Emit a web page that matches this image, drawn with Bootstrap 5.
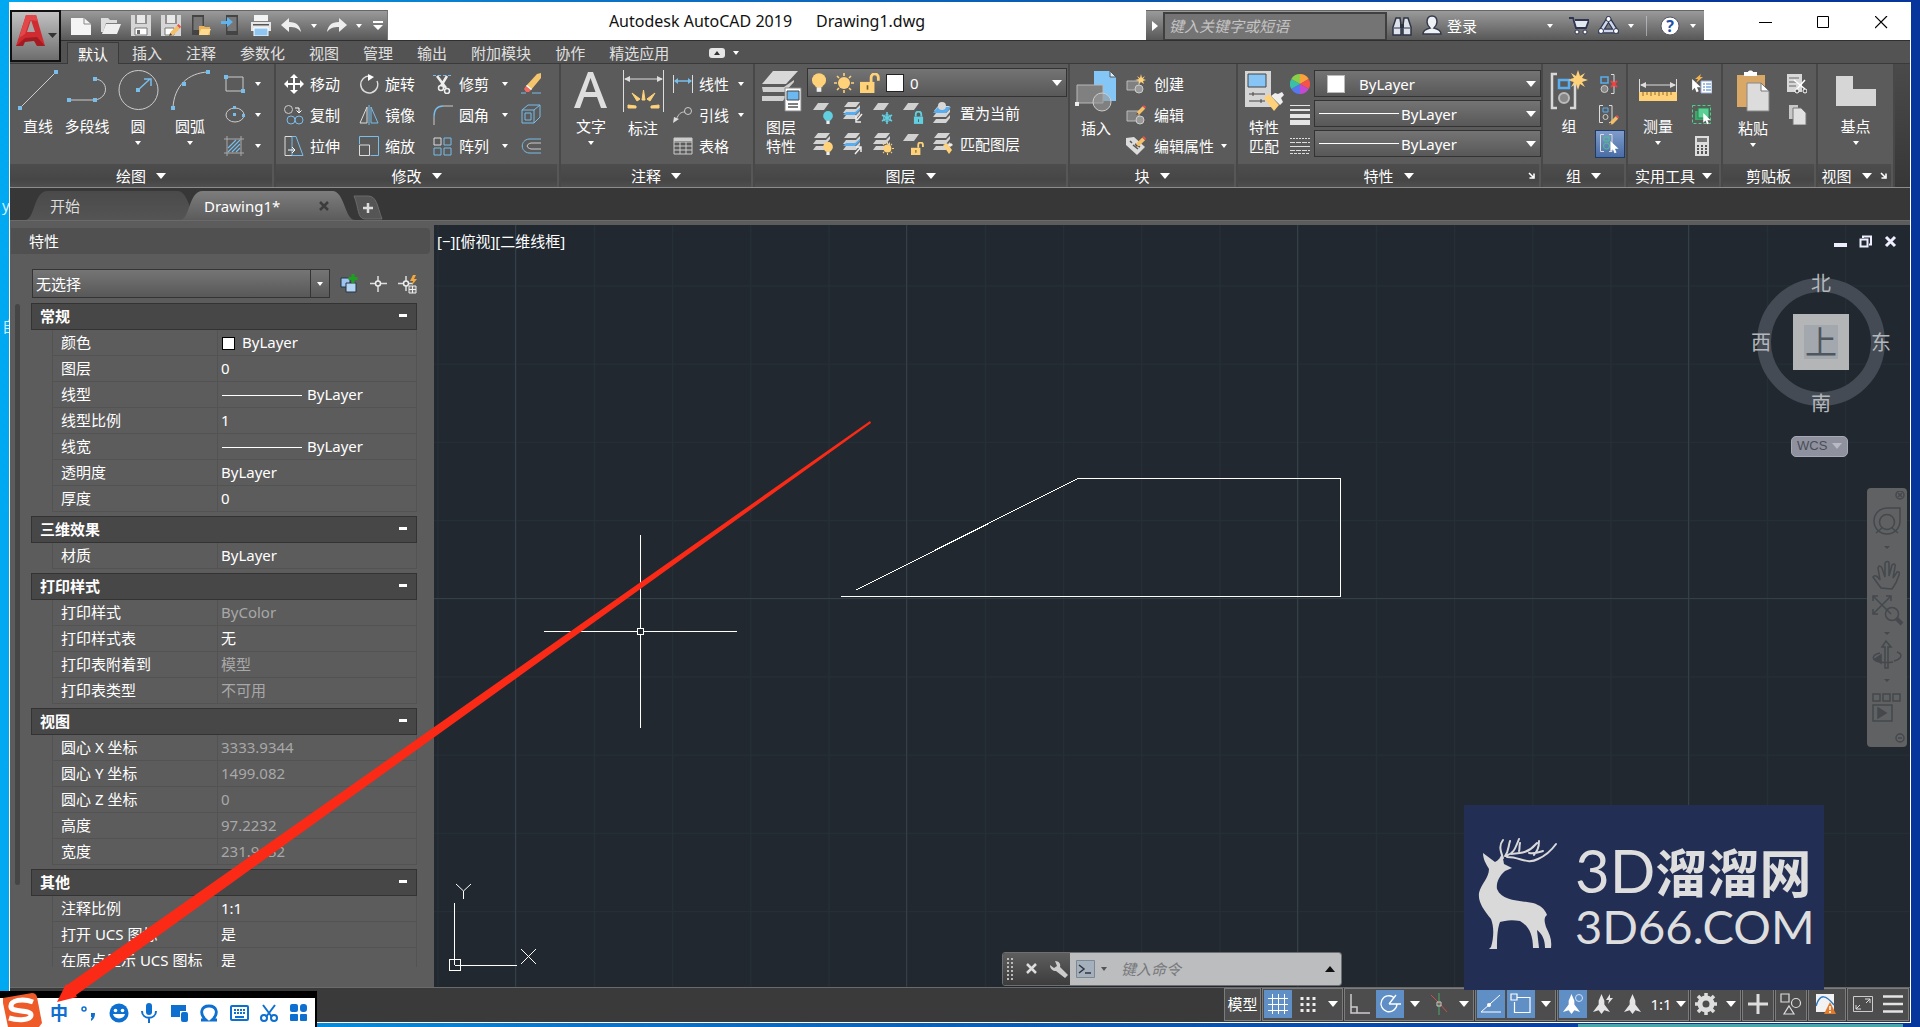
<!DOCTYPE html>
<html lang="zh-CN">
<head>
<meta charset="utf-8">
<meta name="viewport" content="width=device-width, initial-scale=1">
<title>Autodesk AutoCAD 2019 - Drawing1.dwg</title>
<link href="https://cdn.jsdelivr.net/npm/bootstrap@5.3.0/dist/css/bootstrap.min.css" rel="stylesheet">
<style>
:root{--lt:#dcdcdc;--bl:#79bdea;--yl:#ffd27a;--pn:#5b5b5b}
body{margin:0;font:15px/20px "Noto Sans","Noto Sans CJK SC",sans-serif;color:#fff;overflow:hidden}
svg{display:block;flex:none;fill:none}
button{font:inherit;color:inherit;background:none;border:0;padding:0;line-height:20px}
select,input{font:inherit;color:inherit;background:none;border:0;padding:0;appearance:none;outline:0;min-width:0}
option{color:#000}
.desk{height:100vh;padding:2px 9px 4px;background:linear-gradient(90deg,#00a9f2 0,#0b74c8 30%,#0a56ae 60%,#06359c 90%)}
.desk-txt{left:2px;color:#cfeeff}
.teal{right:17px;bottom:0;width:325px;height:3px;background:#4aa5a8}
.win{height:100%;border:1px solid #fff;border-top:0;background:#373737}
/* title bar */
.ttl{height:38px;background:#fff;color:#111;padding:8px 0 0 51px}
.ttl-text{font-size:16px;line-height:22px}
.grad{background:linear-gradient(#9a9a9a,#585858);border-top:1px solid #666}
.appbtn{left:0;top:8px;width:51px;height:52px;border:2px solid #111;background:linear-gradient(#c2c2c2,#6d6d6d);z-index:3}
.qat{width:327px;padding-left:5px;border-right:1px solid #777}
.qb{width:30px;height:29px;display:flex;align-items:center;justify-content:center}
.qs{width:15px}
.info{width:558px;color:#fff}
.info input{width:224px;height:28px;background:#747474;border:1px solid #3f3f3f;border-width:2px 2px 1px;padding-left:4px}
.info input::placeholder{color:#c4c4c4;opacity:1;font-style:italic}
.wbtn{width:58px;height:24px;display:flex;align-items:center;justify-content:center}
.tri{width:0;height:0;border:3px solid transparent;border-top:4px solid #fff;border-bottom:0;flex:none}
.tri-l{border-width:5px;border-top-width:6px;border-bottom-width:0}
/* menu tabs */
.menu{height:24px;background:#535353;border-top:1px solid #2f2f2f;border-bottom:1px solid #3a3a3a;padding:1px 0 0 57px;color:#e0e0e0}
.menu a{color:inherit;text-decoration:none;padding:0 12px;height:22px;line-height:22px;white-space:nowrap}
.menu a.on{background:var(--pn);border:1px solid #3a3a3a;border-bottom:0;margin:0 1px 0 0;padding:0 10px;color:#fff}
/* ribbon */
.ribbon{height:124px;background:linear-gradient(#4a4a4a,#373737);border-bottom:1px solid #8c8c8c}
.rp{background:var(--pn);border-right:2px solid #484848;display:flex;flex-direction:column;flex:none}
.rp-body{height:100px;padding:4px 0 0 4px;display:flex}
.rp-ttl{height:23px;background:linear-gradient(#4d4d4d,#464646 70%,#4f4f4f);border-right:2px solid #575757;display:flex;align-items:center;justify-content:center;gap:10px;position:relative}
.lnch{position:absolute;right:4px;top:8px}
.big{width:52px;display:flex;flex-direction:column;align-items:center;height:93px;padding-top:2px}
.big svg{margin-bottom:6px}
.big .tri{margin-top:5px}
.big .tight{line-height:19px;text-align:center;white-space:nowrap}
.sm{height:31px;display:flex;align-items:center;gap:6px;white-space:nowrap}
.stack{display:flex;flex-direction:column}
.dd{width:16px;height:31px;display:flex;align-items:center;justify-content:center}
.combo{display:flex;align-items:center;height:27px;border:1px solid #333;background:linear-gradient(#747474,#585858);padding:0 4px;gap:2px}
.combo .ln{width:80px;height:1px;background:#fff;flex:none}
.swt{width:18px;height:18px;background:#fff;border:1px solid #222;flex:none}
/* file tabs */
.files{height:32px;background:#373737;padding:3px 0 0 25px}
.ft{width:155px;height:29px;position:relative;display:flex;align-items:center;color:#ddd;text-align:left}
.ft .shape{position:absolute;left:-10px;top:0;width:calc(100% + 20px);height:100%}
.ft>span,.ft>button{position:relative}
.strip{height:5px;background:#5c5c5c;border-top:1px solid #6a6a6a}
/* palette */
.pal{width:424px;background:#5c5c5c;flex:none;padding:3px 0 20px}
.pal-h{height:27px;background:#505050;border-radius:0 4px 4px 0;margin:0 4px 0 1px;padding-left:18px;line-height:26px}
.pal-sel{height:29px;width:298px;border:1px solid #343434;background:linear-gradient(#757575,#585858)}
.pal-sel select{padding-left:3px}
.pal-sel .dv{width:19px;height:27px;border-left:1px solid #343434;display:flex;align-items:center;justify-content:center}
.pal-bar{width:5px;height:581px;background:#454545;border-radius:3px;margin:1px 11px 0 5px;flex:none}
.sec-h{width:100%;height:27px;background:#474747;border:1px solid #333;display:flex;align-items:center;justify-content:space-between;padding:0 9px 2px 8px;font-weight:700}
.sec-h i{width:8px;height:3px;background:#fff}
.pt{width:365px;margin:0 0 4px 21px;table-layout:fixed;border-collapse:separate;border-spacing:0}
.pt th,.pt td{height:26px;border:0 solid #535353;border-width:0 1px 1px 0;font-weight:400;padding:0 0 2px 3px;line-height:20px;white-space:nowrap}
.pt th{width:166px;padding-left:8px;border-left-width:1px}
.pt .off{color:#a8a8a8}
.pt .ln{display:inline-block;width:80px;height:1px;background:#fff;vertical-align:middle;margin:0 5px 0 1px}
.pt .sq{display:inline-block;width:13px;height:13px;border:1px solid #000;background:#fff;vertical-align:-2px;margin:0 7px 0 1px}
/* drawing area */
.cv{background:#212830;flex:1 1 0;min-width:0}
.cv-l{left:3px;top:6px}
.cv-w{right:12px;top:10px;gap:11px}
.cube{right:17px;top:42px;width:144px}
.wcs{right:62px;top:211px;width:57px;height:21px;border-radius:5px;background:#8f929e;border:1px solid #a6a9b4;color:#4a4d58;font:13px/18px "Liberation Sans",sans-serif;justify-content:space-between;padding:0 5px}
.nav-b{right:3px;top:263px;width:40px;height:259px;border-radius:4px;background:#5f6163;padding-top:3px}
.cmd{left:568px;bottom:1px;width:340px;height:34px;border-radius:3px;overflow:hidden;border:1px solid #6d6f71}
.cmd-l{width:67px;flex:none;background:linear-gradient(#5e5e5e,#3c3c3c);gap:12px;padding-left:4px}
.cmd-l button{flex:none}
.cmd-r{background:#bcbdbf;color:#555;padding:0 6px;gap:6px;min-width:0}
.cmd-r input{width:0}
.cmd-r input::placeholder{color:#77797b;opacity:1;font-style:italic}
.logo{right:86px;bottom:32px;width:360px;height:185px;background:#222e54;color:#dedede;z-index:4}
.logo .t1{font:700 52px/58px "Lato","Noto Sans CJK SC",sans-serif;left:111px;top:36px;white-space:nowrap}
.logo .t1 b{font-weight:400;font-size:60px}
.logo .t2{font:400 47px/44px Lato,sans-serif;left:111px;top:99px}
/* status bar */
.stat{height:36px;background:#3a3a3a;border-top:1px solid #6a6a6a;padding:0 1px 1px 0;gap:1px}
.sg{display:flex;gap:2px;align-items:center;padding:1px;border:1px solid #7c7c7c;background:#4d4d4d}
.sg button{width:28px;height:28px;display:flex;align-items:center;justify-content:center;flex:none;white-space:nowrap}
.sg button.cr{width:17px}
.sg button.on{background:#5f8fc5}
/* input-method bar */
.ime{left:0;bottom:0;width:317px;height:36px;background:#000;z-index:6;padding:7px 2px 0 0}
.ime-in{background:#fff;padding-left:44px;color:#0d6fd0}
.ime-in button{width:30px;display:flex;justify-content:center;align-items:center}
.arrow{left:0;top:0;width:100%;height:100%;pointer-events:none;z-index:7}
</style>
<script src="https://cdn.jsdelivr.net/npm/bootstrap@5.3.0/dist/js/bootstrap.bundle.min.js"></script>
</head>
<body>
<svg width="0" height="0" class="position-absolute">
<defs>
<linearGradient id="gTab" x1="0" y1="0" x2="0" y2="1"><stop offset="0" stop-color="#7d7d7d"/><stop offset="1" stop-color="#5c5c5c"/></linearGradient>
<linearGradient id="gTab2" x1="0" y1="0" x2="0" y2="1"><stop offset="0" stop-color="#4a4a4a"/><stop offset="1" stop-color="#545454"/></linearGradient>
<symbol id="sheet" viewBox="0 0 20 20"><path d="M6 1h11l-5 7H1z" fill="#d0d0d0"/></symbol>
<symbol id="stk" viewBox="0 0 20 20"><path d="M6 0h12l-4 5H2zM4 7h10l4-4v3l-4 5H1zM4 13h10l4-4v3l-4 5H1z" fill="#d4d4d4"/></symbol>
<symbol id="bulb" viewBox="0 0 12 16"><g fill="currentColor"><circle cx="6" cy="6" r="6"/><path d="M3 10h6v2H3z"/></g><path d="M4 12h4v4H4z" fill="#eee"/></symbol>
<symbol id="lock" viewBox="0 0 12 14"><path d="M1 6h10v8H1z" fill="currentColor"/><path d="M3 6V3.500a3 3 0 0 1 6 0V6" stroke="currentColor" stroke-width="2"/><path d="M5.500 9h1v3h-1z" fill="#555"/></symbol>
<symbol id="unlock" viewBox="0 0 18 18"><path d="M0 8h13v10H0z" fill="#ffd27a"/><path d="M10 8V4a3 3 0 0 1 6.500 0v3" stroke="#ffd27a" stroke-width="2.500"/><path d="M6 11h1.500v4H6z" fill="#7a6030"/></symbol>
<symbol id="sun" viewBox="0 0 20 20"><circle cx="10" cy="10" r="6" fill="#ffd27a"/><path d="M10 0v3M10 17v3M0 10h3M17 10h3M3 3l2 2M15 15l2 2M17 3l-2 2M5 15l-2 2" stroke="#ffd27a" stroke-width="1.600"/></symbol>
<symbol id="pencil" viewBox="0 0 12 12"><path d="M0 12l1.500-4L8 1.500l3 3L4.500 11z" fill="#f3c069"/><path d="M8 1.500L9.500 0 12 2.500 11 4.500z" fill="#e8504c"/><path d="M0 12l1.200-3 2 2z" fill="#444"/></symbol>
<symbol id="cur" viewBox="0 0 10 16"><path d="M0 0v13l3-3 2 5 2.500-1-2-4.500H10z" fill="#fff"/></symbol>
<symbol id="launch" viewBox="0 0 7 7"><path d="M1 1l4 4M6 1.500V6H1.500" stroke="#fff" stroke-width="1.600"/></symbol>
<symbol id="man" viewBox="0 0 20 22"><path d="M10 0l3 7v4l6 8-6-2-3 4-3-4-6 2 6-8V7z" fill="#fff"/></symbol>
</defs>
</svg>

<div class="desk position-relative">
<span class="desk-txt position-absolute" style="top:195px">y</span>
<span class="desk-txt position-absolute" style="top:316px">自</span>
<div class="teal position-absolute"></div>
<div class="win d-flex flex-column position-relative">

<header class="ttl d-flex position-relative">
<button class="appbtn position-absolute d-flex align-items-center" aria-label="应用程序菜单">
<svg width="46" height="48" viewBox="0 0 46 48"><path d="M4 34L14 3h10l9 31h-8l-2-8H13l-2 8z" fill="#cf2b30"/><path d="M15 20l4-12 4 12z" fill="#a7a7a7"/><path d="M4 34l9-8 12-1 8 9h-8l-3-5-9 1-2 4z" fill="#a31c22"/><path d="M14 3h10l2 6-8-1-5 14-6 4z" fill="#e2474a"/><path d="M36 21h9l-4.500 5z" fill="#333"/></svg></button>
<div class="qat grad d-flex">
<button class="qb" aria-label="新建"><svg width="20" height="18"><path d="M0 1h13l7 6v11H0z" fill="#f4f4f4"/><path d="M13 1v6h7" stroke="#888"/></svg></button>
<button class="qb" aria-label="打开"><svg width="20" height="18"><path d="M0 1h7l2 2h7v3H5L2 15H0z" fill="#ddd"/><path d="M5 7h15l-4 10H1z" fill="#efefef"/></svg></button>
<button class="qb" aria-label="保存"><svg width="20" height="21"><path d="M0 0h20v21H0z" fill="#d6d6d6"/><path d="M4 0h12v9H4z" fill="#8f8f8f"/><path d="M6 0h8v8H6z" fill="#e8e8e8"/><path d="M4 13h12v7H4z" fill="#fff" stroke="#777"/><path d="M6 15h3v4H6z" fill="#666"/></svg></button>
<button class="qb" aria-label="另存为"><svg width="20" height="21"><path d="M0 0h20v21H0z" fill="#d6d6d6"/><path d="M4 0h12v9H4z" fill="#8f8f8f"/><path d="M6 0h8v8H6z" fill="#e8e8e8"/><path d="M4 13h9v7H4z" fill="#fff" stroke="#777"/><use href="#pencil" x="8" y="9" width="12" height="12"/></svg></button>
<button class="qb" aria-label="从 Web 打开"><svg width="20" height="21"><path d="M1 0h12v20H1z" fill="#444"/><path d="M2.500 2h9v13h-9z" fill="#777"/><path d="M8 11h5l1 1h5v8H8z" fill="#e9b45c"/><path d="M10 14h10l-3 6H8z" fill="#ffd98e"/></svg></button>
<button class="qb" aria-label="保存到 Web"><svg width="20" height="21"><path d="M5 0h12v20H5z" fill="#444"/><path d="M6.500 2h9v14h-9z" fill="#777"/><path d="M0 6h6V2l6 5-6 5V9H0z" fill="#5fb4f0"/></svg></button>
<button class="qb" aria-label="打印"><svg width="22" height="21"><path d="M4 0h14v6H4z" fill="#f3f3f3"/><path d="M1 7h20v9H1z" fill="#e6e6e6"/><path d="M3 9h16v1.500H3z" fill="#555"/><path d="M4 13h14v8H4z" fill="#8fc7f2" stroke="#fff"/></svg></button>
<button class="qb" aria-label="放弃"><svg width="21" height="16"><path d="M8 0v4c8 0 11 4 12 10-3-4-6-5-12-5v5L0 7z" fill="#eee"/></svg></button>
<button class="qb qs" aria-label="放弃列表"><span class="tri"></span></button>
<button class="qb" aria-label="重做"><svg width="21" height="16"><path d="M13 0v4C5 4 2 8 1 14c3-4 6-5 12-5v5l8-7z" fill="#eee"/></svg></button>
<button class="qb qs" aria-label="重做列表"><span class="tri"></span></button>
<button class="qb qs ms-1" aria-label="自定义快速访问工具栏"><svg width="10" height="10"><path d="M0 0h10v2H0zM0 4h10L5 9z" fill="#fff"/></svg></button>
</div>
<div class="ttl-text flex-grow-1 text-center"><span class="me-4">Autodesk AutoCAD 2019</span><span>Drawing1.dwg</span></div>
<div class="info grad d-flex align-items-center">
<button class="qb" style="width:17px" aria-label="展开搜索"><svg width="6" height="10"><path d="M0 0l6 5-6 5z" fill="#fff"/></svg></button>
<input type="text" aria-label="搜索" placeholder="键入关键字或短语">
<button class="qb" aria-label="搜索帮助"><svg width="20" height="20"><path d="M4 2h4l1 7v10H1v-8zM12 2h4l3 9v8h-8V9z" fill="#dfe4ec" stroke="#2c3344" stroke-width="1.500"/><path d="M8 8h4v4H8z" fill="#2c3344"/><path d="M2 12h6M12 12h6" stroke="#2c3344"/></svg></button>
<button class="qb" aria-label="用户"><svg width="20" height="21"><path d="M10 1c-4 0-5 3-5 6 0 2 1 4 3 6-4 1-7 3-7 6h18c0-3-3-5-7-6 2-2 3-4 3-6 0-3-1-6-5-6z" fill="#eef1f6" stroke="#333a4a" stroke-width="1.500"/></svg></button>
<button class="me-auto">登录</button>
<button class="qb qs" aria-label="登录选项"><span class="tri"></span></button>
<button class="qb ms-2" style="width:28px" aria-label="应用商店"><svg width="20" height="19"><path d="M0 2h4l3 10h10l3-8H6" fill="#e4e8f0" stroke="#2d3552" stroke-width="1.800"/><circle cx="8" cy="16" r="2" fill="#fff" stroke="#2d3552"/><circle cx="16" cy="16" r="2" fill="#fff" stroke="#2d3552"/></svg></button>
<button class="qb" aria-label="A360"><svg width="21" height="19"><path d="M10.500 3L3 15h15z" stroke="#2d3552" stroke-width="5"/><path d="M10.500 3L3 15h15z" stroke="#cfd8ea" stroke-width="2.500"/><g fill="#fff" stroke="#2d3552"><circle cx="10.500" cy="3" r="2.500"/><circle cx="3" cy="15" r="2.500"/><circle cx="18" cy="15" r="2.500"/></g></svg></button>
<button class="qb qs" aria-label="A360 选项"><span class="tri"></span></button>
<span class="border-start mx-2 opacity-50" style="height:20px"></span>
<button class="qb" aria-label="帮助"><svg width="20" height="20"><circle cx="10" cy="10" r="9" fill="#fff" stroke="#556"/><text x="10" y="16" text-anchor="middle" font-size="16" font-weight="700" fill="#2250a8">?</text></svg></button>
<button class="qb qs me-1" aria-label="帮助选项"><span class="tri"></span></button>
</div>
<div class="d-flex ms-4 ps-2">
<button class="wbtn" aria-label="最小化"><svg width="13" height="13"><path d="M0 6.500h13" stroke="#000"/></svg></button>
<button class="wbtn" aria-label="最大化"><svg width="13" height="13"><path d="M.5.5h11v11H.5z" stroke="#000"/></svg></button>
<button class="wbtn" aria-label="关闭"><svg width="13" height="13"><path d="M0 0l12 12M12 0L0 12" stroke="#000" stroke-width="1.200"/></svg></button>
</div>
</header>

<nav class="menu d-flex">
<a class="on" href="#">默认</a><a href="#">插入</a><a href="#">注释</a><a href="#">参数化</a><a href="#">视图</a><a href="#">管理</a><a href="#">输出</a><a href="#">附加模块</a><a href="#">协作</a><a href="#">精选应用</a>
<button class="d-flex align-items-center gap-2 ms-4 ps-1" aria-label="最小化功能区"><svg width="16" height="10"><path d="M3 0h10q3 0 3 3v4q0 3-3 3H3q-3 0-3-3V3q0-3 3-3z" fill="#e6e6e6"/><path d="M5 7h6L8 3z" fill="#333"/></svg><span class="tri"></span></button>
</nav>

<section class="ribbon d-flex">
<div class="rp" style="width:266px">
<div class="rp-body">
<button class="big" style="width:48px"><svg width="40" height="40"><path d="M2 38L38 2" stroke="#ccc"/><path d="M0 36h4v4H0zM36 0h4v4h-4z" fill="#79bdea"/></svg>直线</button>
<button class="big" style="width:50px"><svg width="40" height="40"><path d="M2 30h26c14-2 14-20 0-21" stroke="#ccc"/><path d="M0 28h4v4H0zM26 28h4v4h-4zM26 7h4v4h-4z" fill="#79bdea"/></svg>多段线</button>
<button class="big"><svg width="41" height="40"><circle cx="20.500" cy="20" r="19.500" stroke="#ccc"/><path d="M20 20L32 9M26 9h7v7" stroke="#79bdea" stroke-width="1.500"/><path d="M18 18h4v4h-4z" fill="#79bdea"/></svg>圆<span class="tri"></span></button>
<button class="big"><svg width="40" height="40"><path d="M3 38C4 16 18 3 38 2" stroke="#ccc"/><path d="M1 36h4v4H1zM12 12h4v4h-4zM36 0h4v4h-4z" fill="#79bdea"/></svg>圆弧<span class="tri"></span></button>
<div class="stack ps-2">
<div class="d-flex"><button class="sm" aria-label="矩形"><svg width="22" height="18"><path d="M2 2h17v14H2z" stroke="#ccc"/><path d="M0 0h4v4H0zM17 14h4v4h-4z" fill="#79bdea"/></svg></button><button class="dd ms-1" aria-label="矩形选项"><span class="tri"></span></button></div>
<div class="d-flex"><button class="sm" aria-label="椭圆"><svg width="22" height="18"><ellipse cx="11" cy="9" rx="9" ry="7" stroke="#ccc"/><path d="M9 7h3v3H9zM9 0h3v3H9zM18 8h3v3h-3z" fill="#79bdea"/></svg></button><button class="dd ms-1" aria-label="椭圆选项"><span class="tri"></span></button></div>
<div class="d-flex"><button class="sm" aria-label="图案填充"><svg width="22" height="20"><path d="M3 0v20M17 0v20M0 3h20M0 17h20" stroke="#aaa"/><path d="M4 12l8-8M4 16L16 4M8 16l8-8M12 16l4-4" stroke="#79bdea" stroke-width="1.200"/></svg></button><button class="dd ms-1" aria-label="填充选项"><span class="tri"></span></button></div>
</div>
</div>
<div class="rp-ttl">绘图<span class="tri tri-l"></span></div>
</div>

<div class="rp" style="width:285px">
<div class="rp-body ps-2">
<div class="stack" style="width:75px">
<button class="sm"><svg width="20" height="20"><path d="M10 0l4 4h-3v5h5V6l4 4-4 4v-3h-5v5h3l-4 4-4-4h3v-5H4v3l-4-4 4-4v3h5V4H6z" fill="#fff"/></svg>移动</button>
<button class="sm"><svg width="20" height="20"><circle cx="4.500" cy="4.500" r="4" stroke="#ccc"/><path d="M11 3h4v4M12.500 5.500L15 8l2.500-2.500" stroke="#fff"/><circle cx="7" cy="15" r="4" stroke="#79bdea"/><circle cx="15" cy="15" r="4" stroke="#79bdea"/></svg>复制</button>
<button class="sm"><svg width="20" height="20"><path d="M8 .5H1v19h7" stroke="#ddd"/><path d="M8 .5v19M8 .5h4l7 19H8" stroke="#79bdea"/><path d="M4 14h7M8 11l3 3-3 3" stroke="#fff"/></svg>拉伸</button>
</div>
<div class="stack" style="width:74px">
<button class="sm"><svg width="20" height="20"><path d="M11 2a8.500 8.500 0 1 0 7 5" stroke="#ddd" stroke-width="1.400"/><path d="M9 0l6 3-6 4z" fill="#fff"/></svg>旋转</button>
<button class="sm"><svg width="20" height="20"><path d="M8 2v16H1z" stroke="#ddd"/><path d="M12 2v16h7z" stroke="#79bdea"/><path d="M10 0v20" stroke="#79bdea"/></svg>镜像</button>
<button class="sm"><svg width="20" height="20"><path d="M.5 8V.5h19v19h-8" stroke="#79bdea"/><path d="M.5 9h10v10.500H.5z" stroke="#ddd"/></svg>缩放</button>
</div>
<div class="stack">
<div class="d-flex"><button class="sm"><svg width="20" height="20"><path d="M0 1.500h20" stroke="#79bdea" stroke-dasharray="3 2"/><path d="M4 2l9 12M14 2L8 12" stroke="#eee" stroke-width="2.500"/><circle cx="8" cy="14" r="2.500" stroke="#eee" stroke-width="1.500"/><circle cx="14" cy="17" r="2.500" stroke="#eee" stroke-width="1.500"/></svg>修剪</button><button class="dd ms-2" aria-label="修剪选项"><span class="tri"></span></button></div>
<div class="d-flex"><button class="sm"><svg width="20" height="20"><path d="M1 12v8M10 1h10" stroke="#ccc"/><path d="M1 12C1 5 4 1 10 1" stroke="#79bdea" stroke-width="1.300"/></svg>圆角</button><button class="dd ms-2" aria-label="圆角选项"><span class="tri"></span></button></div>
<div class="d-flex"><button class="sm"><svg width="20" height="20"><path d="M1 2h7v7H1z" stroke="#ddd"/><path d="M11 2h7v7h-7zM1 12h7v7H1zM11 12h7v7h-7z" stroke="#79bdea"/></svg>阵列</button><button class="dd ms-2" aria-label="阵列选项"><span class="tri"></span></button></div>
</div>
<div class="stack ms-2">
<button class="sm" aria-label="删除"><svg width="21" height="21"><path d="M0 20h5M11 20h9" stroke="#79bdea"/><path d="M5 13L16 1l4-1v5L10 17z" fill="#f5c56d"/><path d="M5 13l5 4-2 2H5l-2-3z" fill="#f06a62"/><path d="M5 13l5 4 1-1-5-4z" fill="#fff"/></svg></button>
<button class="sm" aria-label="分解"><svg width="21" height="21"><path d="M1 6h12v13H1zM4 9h6v7H4zM1 6l6-5h12v12l-6 6M13 6l6-5" stroke="#79bdea"/></svg></button>
<button class="sm" aria-label="偏移"><svg width="21" height="16"><path d="M20 1H8C-1 2-1 14 8 15h12" stroke="#79bdea"/><path d="M20 5H10c-5 1-5 5 0 6h10" stroke="#ccc"/></svg></button>
</div>
</div>
<div class="rp-ttl">修改<span class="tri tri-l"></span></div>
</div>

<div class="rp" style="width:194px">
<div class="rp-body">
<button class="big"><svg width="36" height="40"><path d="M1 38L15 2h5l14 36h-6l-4-11H11L7 38zM12.500 22h10L17.500 8z" fill="#dedede" fill-rule="evenodd"/></svg>文字<span class="tri"></span></button>
<button class="big"><svg width="41" height="42"><path d="M.5 0v42M40.500 0v42M2 9h37" stroke="#ddd"/><path d="M1 9l6-3v6zM40 9l-6-3v6z" fill="#ddd"/><path d="M19 30l1.500-10L22 30zM14 31l-5-8 8 6zM27 31l5-8-8 6zM13 36l-8-1v3h8zM28 36l8-1v3h-8z" fill="#ffd27a" stroke="#ffd27a"/></svg>标注</button>
<div class="stack ps-1">
<div class="d-flex"><button class="sm"><svg width="20" height="18"><path d="M.5 0v18M19.500 0v18" stroke="#ddd"/><path d="M2 6h16" stroke="#79bdea" stroke-width="1.500"/><path d="M1 6l4-3v6zM19 6l-4-3v6z" fill="#79bdea"/></svg>线性</button><button class="dd ms-1" aria-label="线性选项"><span class="tri"></span></button></div>
<div class="d-flex"><button class="sm"><svg width="20" height="18"><circle cx="15" cy="5" r="3.500" stroke="#ccc"/><path d="M12 6C8 6 6 7 3 14" stroke="#ccc"/><path d="M0 17l1-6 5 2z" fill="#ddd"/></svg>引线</button><button class="dd ms-1" aria-label="引线选项"><span class="tri"></span></button></div>
<button class="sm"><svg width="20" height="18"><path d="M1 1h18v16H1zM1 5h18M1 9h18M1 13h18M7 5v12M13 5v12" stroke="#ccc"/><path d="M1 1h18v3H1z" fill="#ccc"/></svg>表格</button>
</div>
</div>
<div class="rp-ttl">注释<span class="tri tri-l"></span></div>
</div>

<div class="rp" style="width:315px">
<div class="rp-body ps-0">
<button class="big"><svg width="42" height="42"><path d="M13 1h25L26 14H2z" fill="#d8d8d8"/><path d="M5 17H2l1 5h22l9-10v-2L24 17zM5 26H2v5h21l3-5z" fill="#cfcfcf"/><path d="M25 18h16v23H25z" fill="#fff" stroke="#888"/><path d="M27 21h12v9H27z" fill="#6cb8f0" stroke="#444"/><path d="M28 34h10M28 37h10" stroke="#555" stroke-width="1.500"/></svg><span class="tight">图层<br>特性</span></button>
<div class="stack">
<div class="combo" style="width:260px;height:29px;gap:6px">
<svg width="16" height="20" color="#ffd27a"><use href="#bulb" width="14" height="19"/></svg>
<svg width="20" height="20"><use href="#sun" width="20" height="20"/></svg>
<svg width="20" height="20"><use href="#unlock" width="20" height="20"/></svg>
<span class="swt"></span><select class="flex-grow-1" aria-label="图层"><option>0</option></select><span class="tri tri-l"></span></div>
<div class="d-flex" style="gap:8px;padding-left:5px">
<button class="sm" aria-label="关"><svg width="22" height="22" color="#62cfe0"><use href="#sheet" width="20" height="20"/><use href="#bulb" x="11" y="9" width="10" height="13"/></svg></button>
<button class="sm" aria-label="隔离"><svg width="22" height="22"><use href="#stk" width="20" height="20"/><path d="M4 10l-3 3h12l5-5v-2l-5 4z" fill="#58aef0"/><path d="M20 12l-5 6M14 14v6h5" stroke="#eee" stroke-width="1.500"/></svg></button>
<button class="sm" aria-label="冻结"><svg width="22" height="22"><use href="#sheet" width="20" height="20"/><path d="M15 10v12M10 13l10 6M20 13l-10 6" stroke="#62cfe0" stroke-width="1.600"/><circle cx="15" cy="16" r="3.500" stroke="#62cfe0"/></svg></button>
<button class="sm" aria-label="锁定"><svg width="22" height="22" color="#62cfe0"><use href="#sheet" width="20" height="20"/><use href="#lock" x="11" y="9" width="11" height="13"/></svg></button>
<button class="sm"><svg width="22" height="22"><use href="#stk" y="4" width="20" height="20"/><path d="M6 5h13l-5 6H1z" fill="#58aef0"/><circle cx="10" cy="4" r="4" fill="#d8d8d8"/></svg>置为当前</button>
</div>
<div class="d-flex" style="gap:8px;padding-left:5px">
<button class="sm" aria-label="打开所有图层"><svg width="22" height="22" color="#ffd27a"><use href="#stk" width="20" height="20"/><use href="#bulb" x="11" y="9" width="10" height="13"/></svg></button>
<button class="sm" aria-label="取消隔离"><svg width="22" height="22"><use href="#stk" width="20" height="20"/><path d="M4 10l-3 3h12l5-5v-2l-5 4z" fill="#58aef0"/><path d="M13 21l6-7M14 14h5v5" stroke="#eee" stroke-width="1.500"/></svg></button>
<button class="sm" aria-label="解冻"><svg width="22" height="22"><use href="#stk" width="20" height="20"/><use href="#sun" x="9" y="9" width="13" height="13"/></svg></button>
<button class="sm" aria-label="解锁"><svg width="22" height="22"><use href="#sheet" width="20" height="20"/><use href="#unlock" x="9" y="9" width="13" height="13"/></svg></button>
<button class="sm"><svg width="22" height="22"><use href="#stk" width="20" height="20"/><path d="M11 12l4-2 5 7-3 4z" fill="#ffd27a"/><path d="M19 10l2 2-3 2-2-2z" fill="#eee"/></svg>匹配图层</button>
</div>
</div>
</div>
<div class="rp-ttl">图层<span class="tri tri-l"></span></div>
</div>

<div class="rp" style="width:168px">
<div class="rp-body ps-0">
<button class="big"><svg width="42" height="42"><path d="M19 1h16l6 6v24H19z" fill="#84c6f5"/><path d="M35 1v6h6z" fill="#d4ecfc" stroke="#555"/><path d="M2 15h26v18H2z" fill="#808080" stroke="#b8b8b8"/><circle cx="27" cy="32" r="9" fill="#999" fill-opacity=".6" stroke="#ccc"/><path d="M0 32h4v4H0z" fill="#eee"/></svg>插入</button>
<div class="stack ps-1 flex-grow-1">
<button class="sm" style="gap:8px"><svg width="20" height="20"><path d="M1 7h12v9H1z" fill="#808080" stroke="#bbb"/><circle cx="13" cy="15" r="4" fill="#999" stroke="#ccc"/><path d="M15 0l1 4 3-2-2 3 3 1-3 1 1 3-3-2-2 2v-3l-4-1 4-1-2-3 3 2z" fill="#ffd27a"/></svg>创建</button>
<button class="sm" style="gap:8px"><svg width="20" height="20"><path d="M1 6h12v10H1z" fill="#808080" stroke="#bbb"/><circle cx="14" cy="15" r="4" fill="#999" stroke="#ccc"/><use href="#pencil" x="10" y="0" width="10" height="10"/></svg>编辑</button>
<div class="d-flex"><button class="sm" style="gap:8px"><svg width="20" height="20"><path d="M0 2l8-1 11 10-8 8L0 9z" fill="#dcdcdc"/><path d="M4 5l2 2M7 9l5 4M9 8l5 3" stroke="#555" stroke-width="1.500"/><use href="#pencil" x="9" y="0" width="11" height="11"/></svg>编辑属性</button><button class="dd ms-auto me-1" aria-label="属性选项"><span class="tri"></span></button></div>
</div>
</div>
<div class="rp-ttl">块<span class="tri tri-l"></span></div>
</div>

<div class="rp" style="width:305px">
<div class="rp-body ps-0">
<button class="big"><svg width="42" height="42"><path d="M2 1h26v36H2z" fill="#d5d5d5"/><path d="M5 4h18v13H5z" fill="#86c5f5" stroke="#444"/><path d="M6 24h16M6 31h16M10 22v4M18 29v4" stroke="#444"/><path d="M21 28l5-4 10 11-5 6z" fill="#ffd27a"/><path d="M28 26l4-3 3 1 4-2 2 3-3 3 2 4-3 3z" fill="#eee"/></svg><span class="tight">特性<br>匹配</span></button>
<div class="stack">
<span class="sm"><svg width="20" height="20" viewBox="-10 -10 20 20"><path d="M0 0V-10A10 10 0 0 1 8.700-5z" fill="#f9a13a"/><path d="M0 0L8.700-5A10 10 0 0 1 8.700 5z" fill="#f5524c"/><path d="M0 0L8.700 5A10 10 0 0 1 0 10z" fill="#c34ad0"/><path d="M0 0V10A10 10 0 0 1-8.700 5z" fill="#5876f0"/><path d="M0 0L-8.700 5A10 10 0 0 1-8.700-5z" fill="#38c0a8"/><path d="M0 0L-8.700-5A10 10 0 0 1 0-10z" fill="#8ace4a"/></svg></span>
<span class="sm"><svg width="20" height="20"><path d="M0 0h20v1H0zM0 4h20v2H0zM0 9h20v4H0zM0 15h20v5H0z" fill="#e4e4e4"/></svg></span>
<span class="sm"><svg width="20" height="18"><path d="M0 1.500h20" stroke="#ddd" stroke-dasharray="2 1"/><path d="M0 5.500h20M0 13.500h20" stroke="#ddd" stroke-dasharray="5 1"/><path d="M0 9.500h20" stroke="#ddd"/><path d="M0 16.500h20" stroke="#ddd" stroke-dasharray="3 1"/></svg></span>
</div>
<div class="stack flex-grow-1 ms-1" style="gap:3px;padding-top:2px">
<div class="combo"><span class="swt mx-2" style="border-color:#bbb"></span><select class="flex-grow-1 ps-1" aria-label="对象颜色"><option>ByLayer</option></select><span class="tri tri-l"></span></div>
<div class="combo"><span class="ln"></span><select class="flex-grow-1" aria-label="线宽"><option>ByLayer</option></select><span class="tri tri-l"></span></div>
<div class="combo"><span class="ln"></span><select class="flex-grow-1" aria-label="线型"><option>ByLayer</option></select><span class="tri tri-l"></span></div>
</div>
</div>
<div class="rp-ttl">特性<span class="tri tri-l"></span><svg class="lnch" width="7" height="7"><use href="#launch" width="7" height="7"/></svg></div>
</div>

<div class="rp" style="width:85px">
<div class="rp-body ps-0">
<button class="big"><svg width="40" height="40"><path d="M8 4H3v34h5M22 10h4v28h-5" stroke="#d8d8d8" stroke-width="2.500"/><path d="M10 10h10v8H10z" stroke="#58aef0" stroke-width="2.500"/><circle cx="15" cy="28" r="5" fill="#888" stroke="#bbb" stroke-width="2"/><path d="M29 0l2 6 5-3-3 5 6 2-6 2 3 5-5-3-2 6-2-6-5 3 3-5-6-2 6-2-3-5 5 3z" fill="#ffd27a"/></svg>组</button>
<div class="stack">
<button class="sm px-1" aria-label="解除编组"><svg width="20" height="20"><path d="M2 3h7v6H2z" stroke="#58aef0" stroke-width="1.500"/><circle cx="5.500" cy="15" r="3.500" fill="#888" stroke="#ccc"/><path d="M12 .5h3v19h-3" stroke="#ddd"/><path d="M12 7l6 6M18 7l-6 6" stroke="#f04040" stroke-width="2"/></svg></button>
<button class="sm px-1" aria-label="组编辑"><svg width="20" height="20"><path d="M4 .5H.5v17H4M10 .5h3v17h-3" stroke="#ddd"/><path d="M4 3h5v4H4z" stroke="#58aef0"/><circle cx="6.500" cy="12" r="2.500" stroke="#ccc"/><use href="#pencil" x="10" y="10" width="10" height="10"/></svg></button>
<button class="sm px-1" style="background:linear-gradient(#7f9ccb,#4a6da6);border:1px solid #1e3a66;height:28px" aria-label="启用组选择"><svg width="20" height="20"><path d="M4 .5H.5v17H4M9 .5h3v17H9" stroke="#ddd"/><path d="M4 3h5v4H4z" stroke="#4fc28a"/><circle cx="6.500" cy="12" r="3" stroke="#4fc28a"/><use href="#cur" x="10" y="7" width="9" height="13"/></svg></button>
</div>
</div>
<div class="rp-ttl">组<span class="tri tri-l"></span></div>
</div>

<div class="rp" style="width:95px">
<div class="rp-body">
<button class="big"><svg width="38" height="40"><path d="M.5 9v14M37.500 9v14M2 15h34" stroke="#ddd"/><path d="M1 15l6-3v6zM37 15l-6-3v6z" fill="#ddd"/><path d="M0 22h38v9H0z" fill="#ffd27a"/><path d="M4 22v4M8 22v3M12 22v4M16 22v3M20 22v4M24 22v3M28 22v4M32 22v3" stroke="#8a6a2a"/></svg>测量<span class="tri"></span></button>
<div class="stack ps-2">
<button class="sm" aria-label="快速选择"><svg width="20" height="20"><path d="M9 7h11v12H9z" fill="#fff" stroke="#9ac"/><path d="M11 10h2M14 10h5M11 13h2M14 13h5M11 16h2M14 16h5" stroke="#3a7fd0"/><use href="#cur" x="0" y="5" width="9" height="14"/><path d="M9 0L3 5h3L4 9l7-6H8z" fill="#f5b14c"/></svg></button>
<button class="sm" aria-label="全部选择"><svg width="20" height="20"><path d="M.5.5h18v18H.5z" stroke="#4fd08a" stroke-dasharray="3 2"/><path d="M3 6h9v9H3z" fill="#3da86c"/><path d="M6 3h11v10H6z" fill="#5cd094" stroke="#2b8050"/><use href="#cur" x="11" y="8" width="8" height="12"/></svg></button>
<button class="sm" aria-label="快速计算器"><svg width="20" height="20"><path d="M3 0h14v20H3z" fill="#ddd"/><path d="M5 2h10v4H5z" fill="#777"/><path d="M5 9h2v2H5zM9 9h2v2H9zM13 9h2v2h-2zM5 12h2v2H5zM9 12h2v2H9zM13 12h2v2h-2zM5 15h2v3H5zM9 15h2v3H9zM13 15h2v3h-2z" fill="#555"/></svg></button>
</div>
</div>
<div class="rp-ttl" style="gap:7px">实用工具<span class="tri tri-l"></span></div>
</div>

<div class="rp" style="width:95px">
<div class="rp-body">
<button class="big"><svg width="34" height="42"><path d="M1 5h28v32H1z" fill="#d9a766"/><path d="M8 6V2h4c0-2 5-2 5 0h4v4z" fill="#fff"/><path d="M11 13h14l8 8v20H11z" fill="#dcdcdc" stroke="#888"/><path d="M25 13v8h8z" fill="#fff" stroke="#777"/></svg>粘贴<span class="tri"></span></button>
<div class="stack ps-2">
<button class="sm" aria-label="剪切"><svg width="20" height="20"><path d="M0 0h15v18H0z" fill="#d8d8d8"/><path d="M2 4h10M2 8h8M2 12h7" stroke="#666"/><path d="M7 6l11 9M18 6L9 16" stroke="#fff" stroke-width="1.500"/><circle cx="10" cy="17" r="2" fill="#555" stroke="#fff"/><circle cx="18" cy="17" r="2" fill="#555" stroke="#fff"/></svg></button>
<button class="sm" aria-label="复制剪裁"><svg width="20" height="20"><path d="M2 0h9v14H2z" fill="#c8c8c8"/><path d="M6 3h8l5 5v12H6z" fill="#e0e0e0" stroke="#777"/></svg></button>
</div>
</div>
<div class="rp-ttl">剪贴板</div>
</div>

<div class="rp" style="width:77px">
<div class="rp-body justify-content-center ps-0">
<button class="big"><svg width="40" height="40"><path d="M0 6h17v13h23v17H0z" fill="#d6d6d6"/></svg>基点<span class="tri"></span></button>
</div>
<div class="rp-ttl pe-3">视图<span class="tri tri-l"></span><svg class="lnch" width="7" height="7"><use href="#launch" width="7" height="7"/></svg></div>
</div>
</section>

<nav class="files d-flex">
<div class="ft"><svg class="shape" viewBox="0 0 170 29" preserveAspectRatio="none"><path d="M0 29C10 29 8 0 22 0H148C160 0 160 29 170 29z" fill="url(#gTab2)"/></svg><span style="padding-left:15px">开始</span></div>
<div class="ft text-white"><svg class="shape" viewBox="0 0 170 29" preserveAspectRatio="none"><path d="M0 29C10 29 8 0 22 0H148C160 0 160 29 170 29z" fill="url(#gTab)"/></svg><span style="padding-left:14px">Drawing1*</span><button class="ms-auto me-3" aria-label="关闭图形"><svg width="10" height="10"><path d="M1 1l8 8M9 1l-8 8" stroke="#3c3c3c" stroke-width="2.500"/></svg></button></div>
<button class="ms-2" aria-label="新图形"><svg width="30" height="29"><path d="M1 5h14c9 0 9 10 14 23H12C4 28 6 16 1 5z" fill="#555" stroke="#6a6a6a"/><path d="M15 12v10M10 17h10" stroke="#ddd" stroke-width="2.500"/></svg></button>
</nav>
<div class="strip"></div>

<main class="d-flex flex-grow-1" style="min-height:0">
<aside class="pal d-flex flex-column">
<div class="pal-h">特性</div>
<div class="d-flex align-items-center" style="margin:15px 0 5px 22px">
<div class="pal-sel d-flex align-items-center"><select class="flex-grow-1" aria-label="选择对象"><option>无选择</option></select><span class="dv"><span class="tri"></span></span></div>
<div class="d-flex ms-2" style="gap:10px">
<button aria-label="PICKADD"><svg width="20" height="20"><path d="M3 4h9v9H3z" fill="#9cc4ee" stroke="#234"/><path d="M8 9h10v9H8z" fill="#b4d4f4" stroke="#234"/><path d="M15 0v9M10.500 4.500h9" stroke="#1da020" stroke-width="3"/></svg></button>
<button aria-label="选择对象"><svg width="20" height="20"><path d="M10 2v5M10 12v6M2 9.500h5M13 9.500h6" stroke="#ddd" stroke-width="1.500"/><circle cx="10" cy="9.500" r="2.500" stroke="#eee" stroke-width="1.500"/></svg></button>
<button aria-label="快速选择"><svg width="20" height="20"><path d="M8 2v5M8 12v5M0 9.500h5M11 9.500h4" stroke="#ddd" stroke-width="1.500"/><circle cx="8" cy="9.500" r="2.500" stroke="#eee" stroke-width="1.500"/><path d="M15 1l-3 6h3l-1 4 5-6h-3l2-4z" fill="#f5a83c"/><path d="M11 12h7v7h-7zM11 15.500h7M14.500 12v7" fill="#777" stroke="#eee"/></svg></button>
</div></div>
<div class="d-flex overflow-hidden flex-grow-1" style="min-height:0">
<div class="pal-bar"></div>
<div style="width:386px">
<button class="sec-h">常规<i></i></button>
<table class="pt"><tr><th>颜色</th><td><span class="sq"></span>ByLayer</td></tr><tr><th>图层</th><td>0</td></tr><tr><th>线型</th><td><span class="ln"></span>ByLayer</td></tr><tr><th>线型比例</th><td>1</td></tr><tr><th>线宽</th><td><span class="ln"></span>ByLayer</td></tr><tr><th>透明度</th><td>ByLayer</td></tr><tr><th>厚度</th><td>0</td></tr></table>
<button class="sec-h">三维效果<i></i></button>
<table class="pt"><tr><th>材质</th><td>ByLayer</td></tr></table>
<button class="sec-h">打印样式<i></i></button>
<table class="pt"><tr><th>打印样式</th><td class="off">ByColor</td></tr><tr><th>打印样式表</th><td>无</td></tr><tr><th>打印表附着到</th><td class="off">模型</td></tr><tr><th>打印表类型</th><td class="off">不可用</td></tr></table>
<button class="sec-h">视图<i></i></button>
<table class="pt"><tr><th>圆心 X 坐标</th><td class="off">3333.9344</td></tr><tr><th>圆心 Y 坐标</th><td class="off">1499.082</td></tr><tr><th>圆心 Z 坐标</th><td class="off">0</td></tr><tr><th>高度</th><td class="off">97.2232</td></tr><tr><th>宽度</th><td class="off">231.9432</td></tr></table>
<button class="sec-h">其他<i></i></button>
<table class="pt"><tr><th>注释比例</th><td>1:1</td></tr><tr><th>打开 UCS 图标</th><td>是</td></tr><tr><th>在原点显示 UCS 图标</th><td>是</td></tr></table>
</div></div>
</aside>

<div class="cv position-relative overflow-hidden">
<svg class="position-absolute top-0 start-0" width="100%" height="100%">
<defs>
<pattern id="minor" x="3.500" y="60.500" width="78.200" height="78.200" patternUnits="userSpaceOnUse"><path d="M.5 0v78.200M0 .5h78.200" stroke="#262f37"/></pattern>
<pattern id="major" x="81" y="373" width="391" height="391" patternUnits="userSpaceOnUse"><path d="M.5 0v391M0 .5h391" stroke="#353f48"/></pattern>
</defs>
<rect width="100%" height="100%" style="fill:url(#minor)"/><rect width="100%" height="100%" style="fill:url(#major)"/>
<g stroke="#fff" shape-rendering="crispEdges">
<path d="M407 371.500H906.500V253.500H644L422 365"/>
<path d="M206.500 310v93M206.500 410v93M110 406.500h93M210 406.500h93M203.500 403.500h6v6h-6z"/>
<path d="M20.500 678v62M20.500 740.500H83M15.500 734.500h11v11h-11z"/>
</g>
<path d="M22 659l7.500 7 7.500-7M29.500 666v8M87 724l15 15M102 724l-15 15" stroke="#fff"/>
</svg>
<div class="cv-l position-absolute">[−][俯视][二维线框]</div>
<div class="cv-w position-absolute d-flex">
<button aria-label="最小化视口"><svg width="14" height="14"><path d="M0 8h13v4H0z" fill="#eef"/></svg></button>
<button aria-label="还原视口"><svg width="14" height="14"><path d="M4 3V1.500h8v8h-2M1.500 4.500h7v7h-7z" stroke="#eef" stroke-width="2"/></svg></button>
<button aria-label="关闭视口"><svg width="14" height="14"><path d="M2 2l9 9M11 2l-9 9" stroke="#eef" stroke-width="3"/></svg></button>
</div>
<svg class="cube position-absolute" height="158" viewBox="-4 -4 144 158">
<circle cx="68" cy="71" r="57" stroke="#444b54" stroke-width="14"/>
<path d="M40 43h56v56H40z" fill="#b4b5b6"/><path d="M51 54h34v34H51z" fill="#a2a8ad"/>
<text x="68" y="83" text-anchor="middle" font-size="32" fill="#50565e">上</text>
<g font-size="20" fill="#b4b7bb" text-anchor="middle"><text x="68" y="20">北</text><text x="68" y="140">南</text><text x="8" y="79">西</text><text x="128" y="79">东</text></g>
</svg>
<button class="wcs position-absolute d-flex align-items-center">WCS<span class="tri tri-l" style="border-top-color:#b8bac4"></span></button>
<div class="nav-b position-absolute">
<svg width="40" height="255" stroke="#45484c" stroke-width="1.500"><circle cx="33" cy="4" r="4"/><path d="M31 2l4 4M35 2l-4 4"/><path d="M20 17h13v13a13 13 0 1 1-13-13z"/><circle cx="20" cy="31" r="7.500"/><path d="M9 42l6-5M31 42l-6-5"/><path d="M17 55h6l-3 3z" fill="#45484c" stroke="none"/>
<path d="M14 97c-3-4-6-8-8-11 2-3 5 0 7 3l-2-12c1-3 3-2 4 0l3 9V72c1-2 4-2 4 0v13l3-11c2-2 4-1 3 2l-2 11 4-6c2-1 3 1 2 3-2 7-4 10-7 14z"/>
<path d="M6 105l18 18M24 105L6 123M6 110v-5h5M19 105h5v5M6 118v5h5"/><circle cx="25" cy="123" r="6.500"/><path d="M29 127l6 6" stroke-width="4"/><path d="M17 141h6l-3 3z" fill="#45484c" stroke="none"/>
<path d="M18 177v-21h-3l4-6 5 6h-3v21z"/><path d="M30 161c6 2 5 7-3 9M13 162c-9 2-9 8 1 9M14 171c4 1 6 1 12 0"/><path d="M8 168l6-4v8z" fill="#45484c"/><path d="M17 188h6l-3 3z" fill="#45484c" stroke="none"/>
<path d="M6 203h7v7H6zM16 203h7v7h-7zM26 203h7v7h-7zM6 214h19v16H6z"/><path d="M11 217l8 5-8 5z" fill="#45484c"/><circle cx="33" cy="247" r="4"/><path d="M31 247h4"/></svg>
</div>
<div class="cmd position-absolute d-flex">
<div class="cmd-l d-flex align-items-center"><svg width="7" height="22"><path d="M1 0v22M5 0v22" stroke="#bbb" stroke-width="2" stroke-dasharray="2 2"/></svg>
<button aria-label="关闭命令行"><svg width="12" height="11"><path d="M1 1l9 9M10 1l-9 9" stroke="#ddd" stroke-width="2.500"/></svg></button>
<button aria-label="自定义"><svg width="19" height="18"><path d="M5 1l2 5-3 2-4-3c0 4 3 6 6 6l9 7 3-3-8-8c1-3-1-6-5-6z" fill="#ccc"/></svg></button></div>
<div class="cmd-r d-flex flex-grow-1 align-items-center"><svg width="19" height="18"><path d="M.5.500h18v17H.5z" fill="#a4b0bc" stroke="#7c8894"/><path d="M3 5l5 4-5 4M9 13h6" stroke="#334" stroke-width="1.500"/></svg><span class="tri" style="border-top-color:#555"></span><input class="flex-grow-1 ms-2" type="text" aria-label="命令" placeholder="键入命令"><button aria-label="命令历史"><svg width="10" height="6"><path d="M0 6l5-6 5 6z" fill="#111"/></svg></button></div>
</div>
</div>
</main>

<footer class="stat d-flex">
<div class="sg ms-auto"><button style="width:33px">模型</button></div>
<div class="sg"><button class="on" aria-label="栅格"><svg width="20" height="20"><path d="M4.500 0v20M10.500 0v20M16.500 0v20M0 4.500h20M0 10.500h20M0 16.500h20" stroke="#fff"/></svg></button><button aria-label="捕捉"><svg width="17" height="17"><path d="M2 1v16M8 1v16M14 1v16" stroke="#eee" stroke-width="3" stroke-dasharray="3 3"/></svg></button><button class="cr" aria-label="捕捉选项"><span class="tri tri-l"></span></button></div>
<div class="sg"><button aria-label="正交"><svg width="20" height="20"><path d="M1 0v19h19M1 13h6v6" stroke="#ccc" stroke-width="1.500"/></svg></button><button class="on" aria-label="极轴"><svg width="22" height="22"><path d="M15 4.500A8 8 0 1 0 18 11M10 11h12M10 11l7-9" stroke="#fff" stroke-width="1.300"/></svg></button><button class="cr" aria-label="极轴选项"><span class="tri tri-l"></span></button><button aria-label="等轴测"><svg width="20" height="22"><path d="M10 0v22" stroke="#4fa86a"/><path d="M2 2l8 8 8 9" stroke="#c85048"/><path d="M8 9h4v4H8z" stroke="#ccc"/></svg></button><button class="cr" aria-label="等轴测选项"><span class="tri tri-l"></span></button></div>
<div class="sg"><button class="on" aria-label="对象捕捉追踪"><svg width="22" height="22"><path d="M20 2L1 19h20" stroke="#fff"/><circle cx="9" cy="12" r="2" fill="#fff"/></svg></button><button class="on" aria-label="对象捕捉"><svg width="22" height="22"><path d="M7 4.500h13v15H4.500V9M1 1h6v6H1z" stroke="#fff" stroke-width="1.200"/></svg></button><button class="cr" aria-label="捕捉设置"><span class="tri tri-l"></span></button></div>
<div class="sg"><button class="on" aria-label="注释可见性"><svg width="22" height="22"><use href="#man" y="1" width="19" height="21"/><circle cx="17" cy="5" r="3.500" fill="#5f8fc5" stroke="#cfe4ff"/></svg></button><button aria-label="自动缩放"><svg width="22" height="22" opacity=".85"><use href="#man" y="1" width="19" height="21"/><path d="M18 1l-4 6h3l-1 4 5-6h-3z" fill="#fff"/></svg></button><button aria-label="注释"><svg width="20" height="22" opacity=".85"><use href="#man" y="1" width="19" height="21"/></svg></button><button class="gap-1" style="width:38px">1:1<span class="tri tri-l"></span></button></div>
<div class="sg"><button aria-label="切换工作空间"><svg width="22" height="22"><circle cx="11" cy="11" r="6" stroke="#ddd" stroke-width="5"/><path d="M11 0v4M11 18v4M0 11h4M18 11h4M3 3l3 3M16 16l3 3M19 3l-3 3M6 16l-3 3" stroke="#ddd" stroke-width="3.500"/></svg></button><button class="cr" aria-label="工作空间列表"><span class="tri tri-l"></span></button></div>
<div class="sg"><button aria-label="注释监视器"><svg width="20" height="20"><path d="M10 0v20M0 10h20" stroke="#ddd" stroke-width="3"/></svg></button></div>
<div class="sg"><button aria-label="隔离对象"><svg width="22" height="22"><path d="M1 1h8v8H1zM9 13l5 8H4z" stroke="#ddd" stroke-width="1.200"/><circle cx="16" cy="10" r="4.500" stroke="#ddd" stroke-width="1.200"/></svg></button></div>
<div class="sg px-1"><button aria-label="硬件加速"><svg width="22" height="22"><path d="M0 1h18v18H0z" fill="#f2f2f2"/><path d="M0 13C4 0 10 2 18 12" stroke="#2c78c0" stroke-width="1.500"/><path d="M14 9l6 12H8z" fill="#e07a2c"/><path d="M14 13v4M14 18v2" stroke="#fff" stroke-width="1.500"/></svg></button></div>
<div class="sg"><button aria-label="全屏显示"><svg width="20" height="16"><path d="M.5.5h19v15H.5z" stroke="#ccc"/><path d="M12 3h5v4M17 3l-4 4M8 13H3V9M3 13l4-4" stroke="#ddd"/></svg></button><button aria-label="自定义"><svg width="20" height="18"><path d="M0 1.500h20M0 9h20M0 16.500h20" stroke="#e4e4e4" stroke-width="2.500"/></svg></button></div>
</footer>

<div class="logo position-absolute">
<svg class="position-absolute" style="left:11px;top:31px" width="90" height="115" viewBox="0 0 90 115"><path d="M8 17l12 9c4-2 5-4 7-9l2 11 8 4-7 3c-6 5-9 12-8 18 5 12 20 11 36 14 7 2 12 6 14 12-4 3-2 8-1 12 4 8 6 13 5 21h-6c0-9-3-14-8-18l2 18h-6c0-13-4-22-13-27-10-2-16 0-20 1-3 8-3 18-3 27h-8l2-2c3-10 3-20 0-28C8 73 3 66 4 57c2-9 10-15 10-24-3-5-6-10-6-16z" fill="#d9d9d9"/><path d="M28 22c-3-8-4-13 0-18M30 20c4-5 3-9 5-15M31 20c8-3 9-7 13-17M36 18c12-1 18-2 24-9l2-2M32 21c14 0 20 8 31 2 9-4 13-8 18-15M54 17c6 1 8 0 14-2M45 7c-1 4 0 6-1 8M64 5c0 7-2 10-5 14" stroke="#d9d9d9" stroke-width="2" stroke-linecap="round"/></svg>
<div class="t1 position-absolute"><b>3D</b>溜溜网</div>
<div class="t2 position-absolute">3D66.COM</div>
</div>
</div>

<svg class="arrow position-absolute"><path d="M57 1002L66 984 67 985 870 421 871 423 76 995 77 997z" fill="#fb2a17"/></svg>

<div class="ime position-absolute d-flex">
<svg class="position-absolute" style="left:2px;bottom:0" width="42" height="35" viewBox="0 0 42 35"><path d="M1 6L30 1q4 0 5 4l5 26-3 4H6L1 11z" fill="#ee5a28"/><path d="M31 10c-10-4-23-2-22 5 1 6 20 2 20 8 0 5-12 6-22 3" stroke="#fff" stroke-width="5"/></svg>
<div class="ime-in d-flex flex-grow-1">
<button class="fw-bold" style="font-size:18px">中</button>
<button aria-label="标点"><svg width="16" height="16"><circle cx="3" cy="4" r="2" stroke="#0d6fd0" stroke-width="1.500"/><path d="M10 8h4c0 4-1 6-4 8v-2l1-2h-1z" fill="#0d6fd0"/></svg></button>
<button aria-label="表情"><svg width="20" height="20"><circle cx="10" cy="10" r="9.500" fill="#0d6fd0"/><circle cx="6.500" cy="7.500" r="1.800" fill="#fff"/><circle cx="13.500" cy="7.500" r="1.800" fill="#fff"/><path d="M4 11h12c-1 6-11 6-12 0z" fill="#fff"/></svg></button>
<button aria-label="语音"><svg width="16" height="20"><rect x="5" y="0" width="6" height="12" rx="3" fill="#0d6fd0"/><path d="M1 8c0 9 14 9 14 0M8 15v5" stroke="#0d6fd0" stroke-width="2"/></svg></button>
<button aria-label="翻译"><svg width="18" height="18"><path d="M1 1h15v6h-6v6H1z" fill="#0d6fd0"/><rect x="11" y="8" width="7" height="10" rx="2" fill="#0d6fd0"/></svg></button>
<button aria-label="符号"><svg width="18" height="18"><path d="M1 16h5C-1 10 1 2 9 2s10 8 3 14h5" stroke="#0d6fd0" stroke-width="2.800"/></svg></button>
<button aria-label="键盘"><svg width="19" height="16"><rect x="1" y="1" width="17" height="14" rx="1" stroke="#0d6fd0" stroke-width="2"/><path d="M4 5h11M4 8h11" stroke="#0d6fd0" stroke-width="2" stroke-dasharray="2 1"/><path d="M5 12h9" stroke="#0d6fd0" stroke-width="2"/></svg></button>
<button aria-label="截图"><svg width="18" height="18"><path d="M3 1l9 12M15 1L6 13" stroke="#0d6fd0" stroke-width="2"/><circle cx="4" cy="14" r="3" stroke="#0d6fd0" stroke-width="2"/><circle cx="14" cy="14" r="3" stroke="#0d6fd0" stroke-width="2"/></svg></button>
<button aria-label="工具箱"><svg width="18" height="18"><g fill="#0d6fd0"><rect y="0" width="8" height="8" rx="2"/><rect x="10" width="7" height="8" rx="3"/><rect y="10" width="8" height="7" rx="1"/><rect x="10" y="10" width="7" height="7" rx="1"/></g></svg></button>
</div></div>
</div>
</body>
</html>
